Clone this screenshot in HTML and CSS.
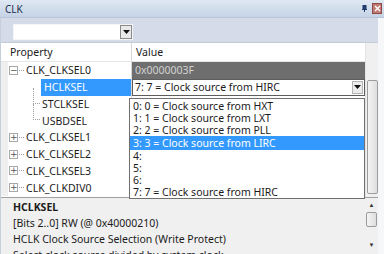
FILE: index.html
```html
<!DOCTYPE html>
<html lang="en">
<head>
    <meta charset="UTF-8">
    <title>CLK</title>
    <link rel="stylesheet" href="styles.css">
</head>
<body>
<div class="titlebar">
    <span class="title">CLK</span>
    <span class="pin">
        <svg width="5" height="7" viewBox="0 0 5 7"><rect x="0.5" y="0" width="4" height="4" fill="#1f3c6e"/><rect x="0" y="4" width="5" height="1" fill="#1f3c6e"/><rect x="2" y="5" width="1" height="2" fill="#1f3c6e"/></svg>
    </span>
    <span class="close">
        <svg width="7" height="7" viewBox="0 0 7 7"><path d="M1 1 L6 6 M6 1 L1 6" stroke="#fff" stroke-width="1.4"/></svg>
    </span>
</div>

<div class="panel">
    <div class="toolbar">
        <div class="combo">
            <span class="combo-text"></span>
            <span class="combo-btn"><svg width="7" height="4" viewBox="0 0 7 4"><path d="M0 0 H7 L3.5 4 Z" fill="#111"/></svg></span>
        </div>
    </div>

    <div class="grid">
        <div class="grid-main">
            <div class="header">
                <div class="col-name">Property</div>
                <div class="col-value">Value</div>
            </div>
            <div class="rows">
                <div class="row">
                    <div class="col-name"><span class="exp">−</span><span class="hline"></span><span class="label">CLK_CLKSEL0</span></div>
                    <div class="col-value dark">0x0000003F</div>
                </div>
                <div class="row">
                    <div class="col-name child"><span class="label sel">HCLKSEL</span></div>
                    <div class="col-value">
                        <div class="vcombo">
                            <span>7: 7 = Clock source from HIRC</span>
                            <span class="vcombo-btn"><svg width="7" height="4" viewBox="0 0 7 4"><path d="M0 0 H7 L3.5 4 Z" fill="#111"/></svg></span>
                        </div>
                    </div>
                </div>
                <div class="row">
                    <div class="col-name child"><span class="tline"></span><span class="label">STCLKSEL</span></div>
                    <div class="col-value"></div>
                </div>
                <div class="row">
                    <div class="col-name child"><span class="tline"></span><span class="label">USBDSEL</span></div>
                    <div class="col-value"></div>
                </div>
                <div class="row">
                    <div class="col-name"><span class="exp">+</span><span class="hline"></span><span class="label">CLK_CLKSEL1</span></div>
                    <div class="col-value"></div>
                </div>
                <div class="row">
                    <div class="col-name"><span class="exp">+</span><span class="hline"></span><span class="label">CLK_CLKSEL2</span></div>
                    <div class="col-value"></div>
                </div>
                <div class="row">
                    <div class="col-name"><span class="exp">+</span><span class="hline"></span><span class="label">CLK_CLKSEL3</span></div>
                    <div class="col-value"></div>
                </div>
                <div class="row">
                    <div class="col-name"><span class="exp">+</span><span class="hline"></span><span class="label">CLK_CLKDIV0</span></div>
                    <div class="col-value"></div>
                </div>
            </div>

            <ul class="droplist">
                <li>0: 0 = Clock source from HXT</li>
                <li>1: 1 = Clock source from LXT</li>
                <li>2: 2 = Clock source from PLL</li>
                <li class="hot">3: 3 = Clock source from LIRC</li>
                <li>4:</li>
                <li>5:</li>
                <li>6:</li>
                <li>7: 7 = Clock source from HIRC</li>
            </ul>
        </div>
        <div class="vscroll grid-scroll">
            <div class="track"></div>
            <div class="thumb"></div>
        </div>
    </div>

    <div class="desc">
        <div class="desc-text">
            <p class="desc-title">HCLKSEL</p>
            <p>[Bits 2..0] RW (@ 0x40000210)</p>
            <p>HCLK Clock Source Selection (Write Protect)</p>
            <p>Select clock source divided by system clock</p>
        </div>
        <div class="vscroll desc-scroll">
            <span class="arrow">▲</span>
            <div class="thumb small"></div>
            <div class="track"></div>
            <span class="arrow">▼</span>
        </div>
    </div>
</div>
</body>
</html>
```

FILE: styles.css
```css
* {
    box-sizing: border-box;
}
body {
    margin: 0;
    width: 384px;
    height: 254px;
    overflow: hidden;
    background: #fff;
    font-family: "Noto Sans", "Liberation Sans", sans-serif;
    font-size: 10.5px;
    color: #1b1b1b;
}

/* title bar */
.titlebar {
    height: 18px;
    display: flex;
    align-items: center;
    padding: 0 2px 0 5px;
    background: linear-gradient(#dfe8f3, #c5d3e5);
    border-bottom: 1px solid #b8c6d8;
}
.title {
    flex: 1;
    color: #1e3050;
    font-size: 10px;
}
.pin {
    display: flex;
    margin-right: 5px;
}
.close {
    width: 10px;
    height: 11px;
    display: flex;
    align-items: center;
    justify-content: center;
    background: #c27a74;
    border: 1px solid #8e4a44;
}

.panel {
    display: flex;
    flex-direction: column;
    height: 236px;
    border-left: 1px solid #c6cfdc;
    border-right: 6px solid #f6f7f9;
}

/* toolbar with combo */
.toolbar {
    height: 25px;
    background: #d5dbe9;
    padding: 6px 0 0 12px;
    border-bottom: 1px solid #c4cbd9;
}
.combo {
    width: 120px;
    height: 16px;
    display: flex;
    background: #fff;
    border: 1px solid #f2f4f8;
}
.combo-text {
    flex: 1;
}
.combo-btn {
    width: 12px;
    display: flex;
    align-items: center;
    justify-content: center;
    background: #e9e9e9;
    border: 1px solid #8a8a8a;
}

/* property grid */
.grid {
    flex: 1;
    display: flex;
    background: #fff;
}
.grid-main {
    flex: 1;
    position: relative;
}
.header {
    height: 19px;
    display: flex;
    align-items: center;
    border-bottom: 1px solid #e6e6e6;
}
.header .col-name {
    padding-left: 9px;
}
.header .col-value {
    padding-left: 4px;
}
.col-name {
    width: 130px;
    display: flex;
    align-items: center;
    height: 100%;
}
.col-value {
    flex: 1;
    height: 100%;
    display: flex;
    align-items: center;
    border-left: 1px solid #d8d8d8;
}
.rows {
    background: linear-gradient(to right, #efefef 7px, #fff 7px);
}
.row {
    height: 16.75px;
    display: flex;
}
.row .col-name {
    position: relative;
    padding-left: 8px;
}
.exp {
    width: 9px;
    height: 9px;
    border: 1px solid #a8a8a8;
    background: #fff;
    color: #555;
    font-size: 9px;
    line-height: 7px;
    text-align: center;
    font-family: "DejaVu Sans", sans-serif;
}
.hline {
    width: 5px;
    border-top: 1px dotted #a0a0a0;
    margin: 0 1px;
}
.label {
    padding: 0 1px;
    line-height: 16px;
}
.row .child {
    padding-left: 31px;
}
.child .label {
    margin-left: 9px;
}
.tline {
    position: absolute;
    left: 32px;
    top: -8px;
    width: 7px;
    height: 16px;
    border-left: 1px dotted #a0a0a0;
    border-bottom: 1px dotted #a0a0a0;
}
.sel {
    flex: 1;
    background: #3399ff;
    color: #fff;
    height: 100%;
    line-height: 17px;
    margin-left: 6px;
    padding-left: 3px;
}
.dark {
    background: #6e6e6e;
    color: #d2d2d2;
    padding-left: 3px;
}
.vcombo {
    flex: 1;
    height: 100%;
    display: flex;
    align-items: center;
    padding-left: 2px;
    border: 1px solid #5d5d5d;
    background: #fff;
}
.vcombo span:first-child {
    flex: 1;
}
.vcombo-btn {
    width: 11px;
    height: 13px;
    margin-right: 1px;
    display: flex;
    align-items: center;
    justify-content: center;
    background: #ececec;
    border: 1px solid #b5b5b5;
}

/* popup list of values */
.droplist {
    position: absolute;
    left: 128px;
    top: 55px;
    width: 236px;
    margin: 0;
    padding: 1px 0 0;
    list-style: none;
    background: #fff;
    border: 1px solid #707070;
}
.droplist li {
    height: 12px;
    line-height: 12px;
    padding-left: 3px;
}
.droplist li.hot {
    background: #3399ff;
    color: #fff;
    height: 14px;
    line-height: 14px;
}

/* scrollbars */
.vscroll {
    width: 13px;
    display: flex;
    flex-direction: column;
    align-items: center;
    background: #f0f0f0;
    border-left: 1px solid #e4e4e4;
}
.grid-scroll {
    padding-bottom: 3px;
}
.grid-scroll .track {
    flex: 0 0 37px;
}
.thumb {
    width: 11px;
    flex: 1;
    background: linear-gradient(to right, #f4f4f4, #dedede);
    border: 1px solid #9c9c9c;
    border-radius: 2px;
}
.thumb.small {
    flex: 0 0 15px;
    margin-top: 1px;
}
.track {
    flex: 1;
}
.arrow {
    font-size: 6px;
    line-height: 12px;
    color: #333;
}

/* description pane */
.desc {
    height: 57px;
    display: flex;
    background: #f0f0f0;
    border-top: 1px solid #a0a0a0;
}
.desc-text {
    flex: 1;
    padding: 1px 0 0 12px;
    overflow: hidden;
    white-space: nowrap;
}
.desc-text p {
    margin: 0;
    line-height: 16px;
}
.desc-title {
    font-weight: bold;
}
.desc-scroll {
    margin: 1px 0 3px;
    border-left: none;
}
```
